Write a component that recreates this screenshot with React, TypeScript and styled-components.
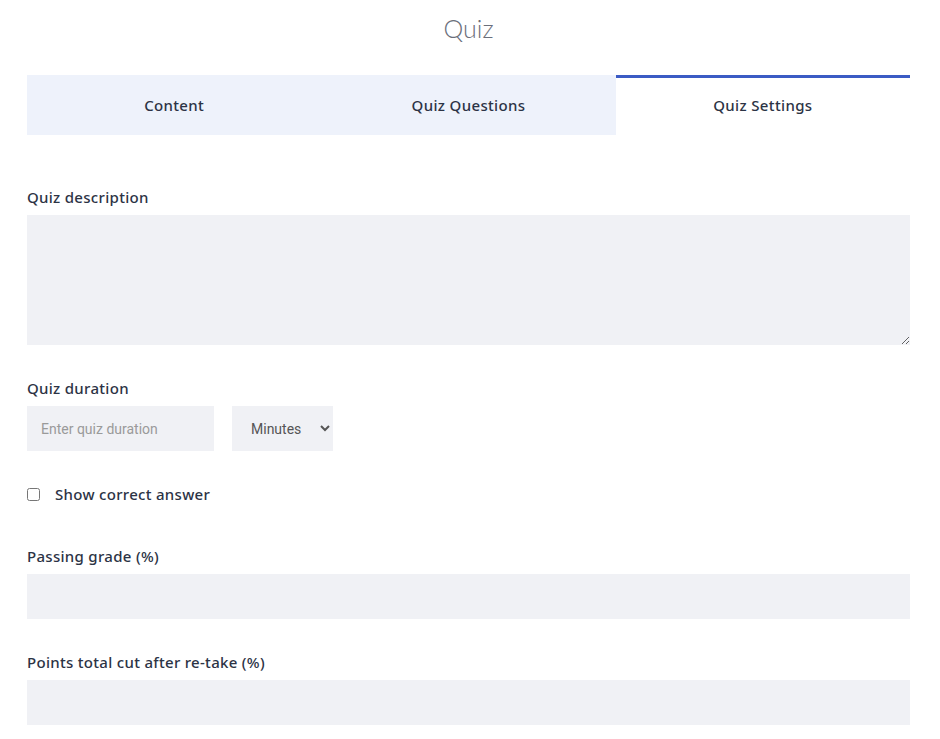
import React from "react";
import styled, { createGlobalStyle } from "styled-components";

const Global = createGlobalStyle`
  html, body { margin: 0; padding: 0; background: #ffffff; }
  body { font-family: "Noto Sans", "DejaVu Sans", sans-serif; color: #2c3345; }
  * { box-sizing: border-box; }
`;

const Page = styled.div`
  padding: 0 30px 20px 27px;
`;

const Title = styled.h1`
  margin: 0;
  padding-top: 13px;
  height: 75px;
  text-align: center;
  font-family: "Lato", sans-serif;
  font-weight: 300;
  font-size: 25px;
  line-height: 30px;
  color: #6b6f7b;
`;

const Tabs = styled.div`
  display: grid;
  grid-template-columns: repeat(3, 1fr);
  height: 60px;
  background: #eef2fb;
`;

const Tab = styled.div<{ $active?: boolean }>`
  display: flex;
  align-items: center;
  justify-content: center;
  font-size: 15px;
  font-weight: 500;
  letter-spacing: 0.35px;
  color: #2c3345;
  background: ${(p) => (p.$active ? "#ffffff" : "transparent")};
  border-top: 3px solid ${(p) => (p.$active ? "#3b5bc4" : "transparent")};
  padding-bottom: 3px;
`;

const Form = styled.div`
  padding-top: 53px;
  display: flex;
  flex-direction: column;
`;

const Field = styled.div<{ $mt?: number }>`
  display: flex;
  flex-direction: column;
  margin-top: ${(p) => p.$mt ?? 0}px;
`;

const Label = styled.label`
  font-size: 15px;
  font-weight: 500;
  letter-spacing: 0.3px;
  line-height: 18px;
  margin-bottom: 9px;
  color: #2c3345;
`;

const TextArea = styled.textarea`
  height: 130px;
  width: 100%;
  border: none;
  background: #f0f1f5;
  outline: none;
  padding: 12px;
  font-family: "Roboto", sans-serif;
  font-size: 14px;
`;

const Row = styled.div`
  display: flex;
  gap: 18px;
`;

const Input = styled.input<{ $w?: number }>`
  height: 45px;
  width: ${(p) => (p.$w ? `${p.$w}px` : "100%")};
  border: none;
  outline: none;
  background: #f0f1f5;
  padding: 0 14px;
  font-family: "Roboto", sans-serif;
  font-size: 14px;
  color: #333;
  &::placeholder { color: #9a9a9a; }
`;

const Select = styled.select`
  height: 45px;
  width: 101px;
  border: none;
  outline: none;
  background: #f0f1f5;
  padding: 0 8px 0 15px;
  font-family: "Roboto", sans-serif;
  font-size: 14px;
  color: #555;
`;

const CheckRow = styled.label`
  display: flex;
  align-items: center;
  gap: 15px;
  margin-top: 29px;
  height: 28px;
  font-size: 15px;
  font-weight: 500;
  letter-spacing: 0.3px;
  color: #2c3345;
`;

const Check = styled.input`
  margin: 0;
  width: 13px;
  height: 13px;
`;

export default function App() {
  return (
    <>
      <Global />
      <Page>
        <Title>Quiz</Title>
        <Tabs>
          <Tab>Content</Tab>
          <Tab>Quiz Questions</Tab>
          <Tab $active>Quiz Settings</Tab>
        </Tabs>
        <Form>
          <Field>
            <Label>Quiz description</Label>
            <TextArea />
          </Field>
          <Field $mt={34}>
            <Label>Quiz duration</Label>
            <Row>
              <Input $w={187} placeholder="Enter quiz duration" />
              <Select defaultValue="Minutes">
                <option>Minutes</option>
                <option>Hours</option>
              </Select>
            </Row>
          </Field>
          <CheckRow>
            <Check type="checkbox" />
            Show correct answer
          </CheckRow>
          <Field $mt={39}>
            <Label>Passing grade (%)</Label>
            <Input />
          </Field>
          <Field $mt={34}>
            <Label>Points total cut after re-take (%)</Label>
            <Input />
          </Field>
        </Form>
      </Page>
    </>
  );
}
